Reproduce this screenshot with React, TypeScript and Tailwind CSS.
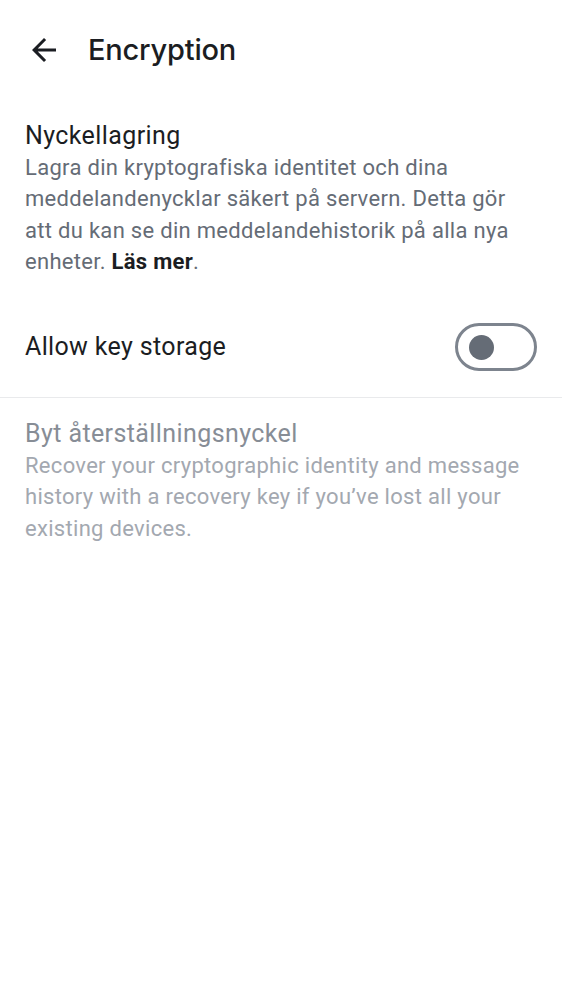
export default function App() {
  return (
    <div className="w-[562px] min-h-[1000px] bg-white text-[#1b1d22] font-['Roboto',sans-serif]">
      {/* Top bar */}
      <div className="flex items-center h-[100px] pl-[26px]">
        <svg width="36" height="36" viewBox="0 0 24 24" className="text-[#1b1d22]">
          <path
            fill="currentColor"
            d="M20 11H7.83l5.59-5.59L12 4l-8 8 8 8 1.41-1.41L7.83 13H20v-2z"
          />
        </svg>
        <h1 className="ml-[26px] text-[29px] font-medium tracking-[-0.2px] font-['Inter',sans-serif]">
          Encryption
        </h1>
      </div>

      {/* Key storage section */}
      <div className="px-[25px] pt-[20px]">
        <div className="text-[25px] leading-[32px] tracking-[0.4px]">Nyckellagring</div>
        <p className="text-[22px] leading-[31.3px] text-[#656c76] tracking-[0.3px]">
          Lagra din kryptografiska identitet och dina meddelandenycklar säkert på servern. Detta gör att du kan se din meddelandehistorik på alla nya enheter.{" "}
          <span className="font-bold text-[#1b1d22]">Läs mer</span>.
        </p>
      </div>

      <div className="flex items-center justify-between px-[25px] h-[100px] mt-[20px]">
        <span className="text-[25px] tracking-[0.35px]">Allow key storage</span>
        <div className="w-[82px] h-[48px] rounded-full border-[3px] border-[#7d848e] flex items-center pl-[11px]">
          <div className="w-[25px] h-[25px] rounded-full bg-[#656c76]" />
        </div>
      </div>

      <div className="h-px bg-[#e9eaec]" />

      {/* Recovery key section (disabled) */}
      <div className="px-[25px] pt-[20px]">
        <div className="text-[25px] leading-[32px] tracking-[0.4px] text-[#878d96]">Byt återställningsnyckel</div>
        <p className="text-[22px] leading-[31.3px] text-[#a3a8b0] tracking-[0.3px]">
          Recover your cryptographic identity and message history with a recovery key if you’ve lost all your existing devices.
        </p>
      </div>
    </div>
  );
}
